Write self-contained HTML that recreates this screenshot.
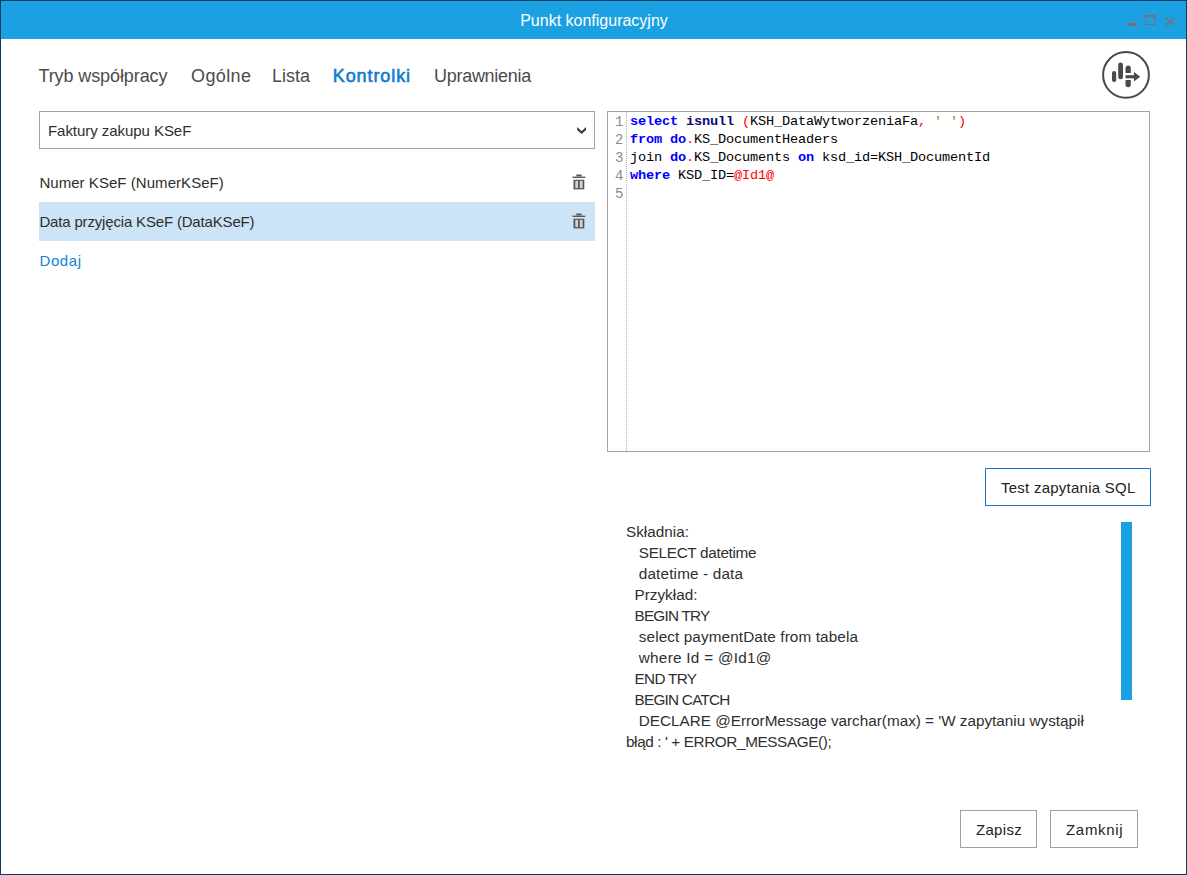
<!DOCTYPE html>
<html><head><meta charset="utf-8">
<style>
html,body{margin:0;padding:0;}
body{width:1187px;height:875px;overflow:hidden;background:#fff;position:relative;font-family:"Liberation Sans",sans-serif;}
.a{position:absolute;}
.t{position:absolute;white-space:pre;line-height:1;}
#win{left:0;top:0;width:1187px;height:875px;box-sizing:border-box;border:1px solid #0d3a64;}
#title{left:1px;top:1px;width:1185px;height:38px;background:#1ba1e2;}
#ttl{left:0.5px;width:1187px;text-align:center;top:12.6px;font-size:16px;color:#fff;}
.tab{font-size:18px;color:#4b4b4b;top:67px;}
.tab.on{color:#0f7bd0;font-weight:normal;-webkit-text-stroke:0.6px #0f7bd0;}
.box{box-sizing:border-box;border:1px solid #a4a4a8;}
.lst{font-size:15px;color:#2e2e2e;}
.code{font-family:"Liberation Mono",monospace;font-size:13.6px;letter-spacing:-0.16px;color:#000;}
.ln{font-family:"Liberation Mono",monospace;font-size:14px;color:#8a8a8a;}
.kw{color:#0000ff;font-weight:bold;}
.rd{color:#ff0000;}
.help{font-size:15.3px;color:#2f2f2f;}
</style></head><body>
<div id="win" class="a"></div>
<div id="title" class="a"></div>
<div id="ttl" class="t">Punkt konfiguracyjny</div>
<!-- window controls -->
<svg class="a" style="left:1120px;top:10px" width="62" height="22" viewBox="1120 10 62 22">
  <rect x="1127" y="23" width="10" height="3" fill="#7a716c"/>
  <rect x="1145.5" y="15.5" width="10" height="9" fill="none" stroke="#7a716c" stroke-width="1"/>
  <rect x="1145" y="15" width="11" height="2" fill="#7a716c"/>
  <path d="M1165.5 17.5 L1174.5 26 M1174.5 17.5 L1165.5 26" stroke="#7a716c" stroke-width="1.6"/>
</svg>

<div class="t tab" style="left:38.4px;letter-spacing:-0.09px">Tryb współpracy</div>
<div class="t tab" style="left:191px;letter-spacing:0.4px">Ogólne</div>
<div class="t tab" style="left:272px">Lista</div>
<div class="t tab on" style="left:332.8px;letter-spacing:0.9px">Kontrolki</div>
<div class="t tab" style="left:434px;letter-spacing:-0.28px">Uprawnienia</div>

<!-- round icon -->
<svg class="a" style="left:1095px;top:45px" width="65" height="60" viewBox="1095 45 65 60">
  <circle cx="1126" cy="74.9" r="22.9" fill="none" stroke="#494949" stroke-width="2"/>
  <rect x="1112" y="71" width="4.2" height="11" rx="2.1" fill="#4a4a4a"/>
  <rect x="1118.2" y="62.5" width="4.8" height="16.8" rx="2.4" fill="#4a4a4a"/>
  <path d="M1125.5 73.1 V68.2 A2.65 2.65 0 0 1 1130.8 68.2 V73.1 Z" fill="#4a4a4a"/>
  <path d="M1125.5 80.1 V84.6 A2.65 2.65 0 0 0 1130.8 84.6 V80.1 Z" fill="#4a4a4a"/>
  <rect x="1125.5" y="75.2" width="9" height="3.1" fill="#4a4a4a"/>
  <path d="M1134 72 L1140.2 76.7 L1134 81.4 Z" fill="#4a4a4a"/>
</svg>

<!-- dropdown -->
<div class="a box" style="left:39px;top:111px;width:556px;height:38px;"></div>
<div class="t lst" style="left:48px;top:123px;letter-spacing:-0.05px">Faktury zakupu KSeF</div>
<svg class="a" style="left:570px;top:120px" width="22" height="20" viewBox="570 120 22 20">
  <path d="M577.2 126.9 L581.6 131.2 L586 126.9 L586 129.9 L581.6 134.1 L577.2 129.9 Z" fill="#363636"/>
</svg>

<!-- list -->
<div class="t lst" style="left:39.4px;top:175px;letter-spacing:0.05px">Numer KSeF (NumerKSeF)</div>
<div class="a" style="left:39px;top:202px;width:556px;height:39px;background:#cce4f7"></div>
<div class="t lst" style="left:39.4px;top:214px;letter-spacing:-0.17px">Data przyjęcia KSeF (DataKSeF)</div>
<div class="t lst" style="left:39.5px;top:253px;color:#1383d6;letter-spacing:0.6px">Dodaj</div>

<!-- editor -->
<div class="a box" style="left:607px;top:111px;width:543px;height:341px;"></div>

<!-- trash icons -->
<svg class="a" style="left:568px;top:170px" width="22" height="64" viewBox="568 170 22 64">
  <g id="trash">
    <rect x="576.3" y="174.5" width="5.3" height="1.9" fill="#585858"/>
    <rect x="572.5" y="176.6" width="12.8" height="1.4" fill="#585858"/>
    <rect x="573.5" y="179.7" width="10.8" height="9.7" fill="#585858"/>
    <rect x="575.3" y="180.8" width="2.7" height="7.3" fill="#d2d2d2"/>
    <rect x="579.8" y="180.8" width="2.8" height="7.3" fill="#d2d2d2"/>
  </g>
  <use href="#trash" transform="translate(0,39)"/>
</svg>

<!-- editor content -->
<svg class="a" style="left:626px;top:112px" width="1" height="339"><line x1="0.5" y1="0" x2="0.5" y2="339" stroke="#b0b0b0" stroke-width="1" stroke-dasharray="1 1"/></svg>
<div class="t ln" style="left:615px;top:113px;line-height:18px">1
2
3
4
5</div>
<div class="t code" style="left:630px;top:113px;line-height:18px"><span class="kw">select</span> <span class="kw" style="color:#0a0a72">isnull</span> <span class="rd">(</span>KSH_DataWytworzeniaFa<span class="rd">,</span> <span style="color:#a8820a">' '</span><span class="rd">)</span>
<span class="kw">from</span> <span class="kw">do</span><span class="rd">.</span>KS_DocumentHeaders
join <span class="kw">do</span><span class="rd">.</span>KS_Documents <span class="kw">on</span> ksd_id=KSH_DocumentId
<span class="kw">where</span> KSD_ID=<span class="rd">@Id1@</span>
</div>

<!-- test button -->
<div class="a box" style="left:985px;top:468px;width:166px;height:38px;border-color:#1a78cc"></div>
<div class="t lst" style="left:1001px;top:480px;color:#222;letter-spacing:0.25px">Test zapytania SQL</div>

<!-- help -->
<div class="t help" style="left:626px;top:524.40px"><span style="letter-spacing:0px">Składnia:</span></div>
<div class="t help" style="left:626px;top:545.36px">   <span style="letter-spacing:-0.31px">SELECT datetime</span></div>
<div class="t help" style="left:626px;top:566.32px">   <span style="letter-spacing:0.16px">datetime - data</span></div>
<div class="t help" style="left:626px;top:587.28px">  <span style="letter-spacing:0px">Przykład:</span></div>
<div class="t help" style="left:626px;top:608.24px">  <span style="letter-spacing:-0.78px">BEGIN TRY</span></div>
<div class="t help" style="left:626px;top:629.20px">   <span style="letter-spacing:0.11px">select paymentDate from tabela</span></div>
<div class="t help" style="left:626px;top:650.16px">   <span style="letter-spacing:0.28px">where Id = @Id1@</span></div>
<div class="t help" style="left:626px;top:671.12px">  <span style="letter-spacing:-0.68px">END TRY</span></div>
<div class="t help" style="left:626px;top:692.08px">  <span style="letter-spacing:-0.75px">BEGIN CATCH</span></div>
<div class="t help" style="left:626px;top:713.04px">   <span style="letter-spacing:-0.01px">DECLARE @ErrorMessage varchar(max) = 'W zapytaniu wystąpił</span></div>
<div class="t help" style="left:626px;top:734.00px"><span style="letter-spacing:-0.39px">błąd : ' + ERROR_MESSAGE();</span></div>
<div class="a" style="left:1121px;top:522px;width:11px;height:178px;background:#1ba1e2"></div>

<!-- bottom buttons -->
<div class="a box" style="left:960px;top:810px;width:77px;height:38px;border-color:#a0a0a0"></div>
<div class="t lst" style="left:976px;top:822px;color:#222;letter-spacing:0.3px">Zapisz</div>
<div class="a box" style="left:1050px;top:810px;width:88px;height:38px;border-color:#a0a0a0"></div>
<div class="t lst" style="left:1066px;top:822px;color:#222;letter-spacing:0.7px">Zamknij</div>
</body></html>
